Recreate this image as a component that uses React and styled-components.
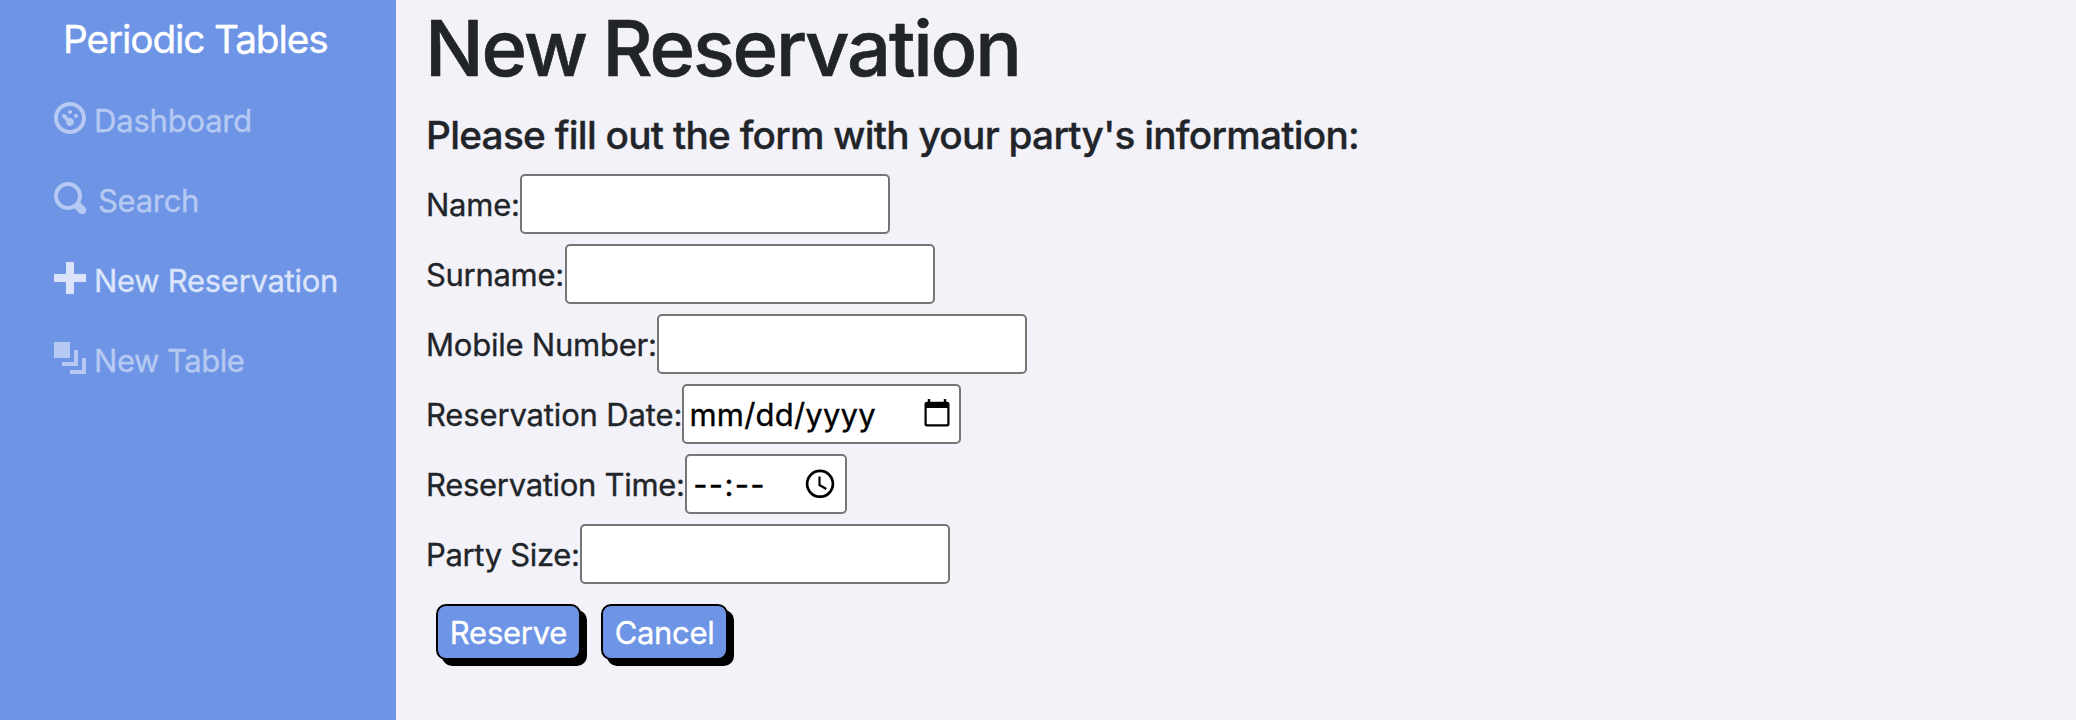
import React from "react";
import styled, { createGlobalStyle } from "styled-components";

const GlobalStyle = createGlobalStyle`
  *, *::before, *::after { box-sizing: border-box; }
  body {
    margin: 0;
    background: #f3f2f9;
    color: #212529;
    font-family: Inter, "Liberation Sans", sans-serif;
    font-size: 31px;
    -webkit-text-stroke: 0.35px currentColor;
  }
`;

const Page = styled.div`
  display: flex;
  height: 100vh;
  overflow: hidden;
`;

const Sidebar = styled.nav`
  flex: 0 0 396px;
  background: #6e94e6;
`;

const Brand = styled.a`
  display: block;
  margin-bottom: 3px;
  padding: 0 0 1px 63px;
  color: #fff;
  font-size: 38.8px;
  line-height: 77px;
  letter-spacing: -1.13px;
  white-space: nowrap;
`;

const NavList = styled.ul`
  margin: 0;
  padding: 0 0 0 54px;
  list-style: none;
`;

const NavItem = styled.li`
  display: flex;
  align-items: center;
  gap: ${(p) => p.$gap || 8}px;
  height: 80px;
  color: ${(p) => (p.$active ? "#dbe4fa" : "#b6c9f2")};
  letter-spacing: ${(p) => p.$spacing}px;
  line-height: 80px;
  white-space: nowrap;
`;

const NavIcon = styled.svg`
  flex: none;
  width: 32px;
  height: 32px;
  margin-bottom: 6px;
  fill: currentColor;
`;

const Main = styled.main`
  flex: 1;
  padding-left: 30px;
`;

const Title = styled.h1`
  margin: 0 0 15px -1px;
  font-size: 77.6px;
  font-weight: 500;
  line-height: 96px;
  letter-spacing: -2.15px;
  word-spacing: -2px;
  white-space: nowrap;
  -webkit-text-stroke-width: 0.6px;
`;

const Subtitle = styled.h4`
  margin: 0 0 15px 0;
  font-size: 38.8px;
  font-weight: 500;
  line-height: 48px;
  letter-spacing: -0.74px;
  white-space: nowrap;
`;

const Form = styled.form`
  display: flex;
  flex-direction: column;
  gap: 10px;
`;

const Row = styled.div`
  display: flex;
  height: 60px;
`;

const Label = styled.label`
  flex: none;
  width: ${(p) => p.$width}px;
  letter-spacing: ${(p) => p.$spacing}px;
  line-height: 61px;
  white-space: nowrap;
`;

const fieldBox = `
  height: 60px;
  border: 2px solid #767676;
  border-radius: 5px;
  background: #fff;
`;

const TextInput = styled.input`
  ${fieldBox}
  width: 370px;
  padding: 2px 4px;
  color: #000;
  font: inherit;
  outline: none;
`;

const PickerInput = styled.div`
  ${fieldBox}
  display: flex;
  justify-content: space-between;
  width: ${(p) => p.$width}px;
  padding: 0 ${(p) => p.$right}px 0 ${(p) => p.$left}px;
  color: #000;
  letter-spacing: ${(p) => p.$spacing}px;
  line-height: 57px;
  white-space: pre;
`;

const PickerIcon = styled.svg`
  flex: none;
  width: ${(p) => p.$width}px;
  height: 30px;
  margin-top: 12px;
`;

const Buttons = styled.div`
  display: flex;
  gap: 20px;
  padding: 10px 0 0 10px;
`;

const Button = styled.button`
  width: ${(p) => p.$width}px;
  height: 56px;
  padding: 0;
  border: 2px solid #000;
  border-radius: 10px;
  background: #6e94e6;
  box-shadow: 6px 6px 0 #000;
  color: #fff;
  font: inherit;
  letter-spacing: ${(p) => p.$spacing}px;
  line-height: 53px;
`;

const navItems = [
  {
    text: "Dashboard",
    spacing: -0.2,
    path: "M4 0c-2.2 0-4 1.8-4 4s1.8 4 4 4 4-1.8 4-4-1.8-4-4-4zm0 1c1.66 0 3 1.34 3 3s-1.34 3-3 3-3-1.34-3-3 1.34-3 3-3zm0 1c-.28 0-.5.22-.5.5s.22.5.5.5.5-.22.5-.5-.22-.5-.5-.5zm-1.66 1a.5.5 0 0 0-.19.84l.91.91c-.02.08-.06.16-.06.25 0 .55.45 1 1 1s1-.45 1-1-.45-1-1-1c-.09 0-.17.04-.25.06l-.91-.91a.5.5 0 0 0-.44-.16.5.5 0 0 0-.06 0zm3.16 0c-.28 0-.5.22-.5.5s.22.5.5.5.5-.22.5-.5-.22-.5-.5-.5z",
  },
  {
    text: "Search",
    spacing: -0.3,
    gap: 12,
    path: "M3.5 0c-1.93 0-3.5 1.57-3.5 3.5s1.57 3.5 3.5 3.5c.59 0 1.17-.14 1.66-.41a1 1 0 0 0 .13.13l1 1a1.02 1.02 0 1 0 1.44-1.44l-1-1a1 1 0 0 0-.16-.13c.27-.49.44-1.06.44-1.66 0-1.93-1.55-3.5-3.5-3.5zm0 1c1.39 0 2.5 1.11 2.5 2.5 0 .66-.24 1.27-.66 1.72-.01.01-.02.02-.03.03a1 1 0 0 0-.13.13c-.44.4-1.04.63-1.69.63-1.39 0-2.5-1.11-2.5-2.5s1.11-2.5 2.5-2.5z",
  },
  {
    text: "New Reservation",
    spacing: -0.29,
    active: true,
    path: "M3 0v3h-3v2h3v3h2v-3h3v-2h-3v-3h-2z",
  },
  {
    text: "New Table",
    spacing: -0.47,
    path: "M0 0v4h4v-4h-4zm5 2v3h-3v1h4v-4h-1zm2 2v3h-3v1h4v-4h-1z",
  },
];

function CalendarIcon() {
  return (
    <PickerIcon $width={26} viewBox="0 0 26 30">
      <path d="M3.8 1h2.4v2.7h13.6V1h2.4v2.7h.8a2.5 2.5 0 0 1 2.5 2.5V26a2.5 2.5 0 0 1-2.5 2.5H3A2.5 2.5 0 0 1 .5 26V6.200A2.500 2.500 0 0 1 3 3.700h.8zM2.700 10v15.500a.8.8 0 0 0 .8.8h19a.8.8 0 0 0 .8-.8V10z" fillRule="evenodd" />
    </PickerIcon>
  );
}

function ClockIcon() {
  return (
    <PickerIcon $width={30} viewBox="0 0 30 30" fill="none" stroke="#000">
      <circle cx="15" cy="15.800" r="12.900" strokeWidth="2.700" />
      <path d="M14.500 8.500v8.500l6.800 4" strokeWidth="2.200" />
    </PickerIcon>
  );
}

function Field({ label, width, spacing, children }) {
  return (
    <Row>
      <Label $width={width} $spacing={spacing}>{label}</Label>
      {children || <TextInput type="text" aria-label={label} />}
    </Row>
  );
}

export default function App() {
  return (
    <Page>
      <GlobalStyle />
      <Sidebar>
        <Brand>Periodic Tables</Brand>
        <NavList>
          {navItems.map((item) => (
            <NavItem key={item.text} $active={item.active} $gap={item.gap} $spacing={item.spacing}>
              <NavIcon viewBox="0 0 8 8"><path d={item.path} /></NavIcon>
              {item.text}
            </NavItem>
          ))}
        </NavList>
      </Sidebar>
      <Main>
        <Title>New Reservation</Title>
        <Subtitle>Please fill out the form with your party's information:</Subtitle>
        <Form onSubmit={(e) => e.preventDefault()}>
          <Field label="Name:" width={94} spacing={-0.25} />
          <Field label="Surname:" width={139} spacing={-0.3} />
          <Field label="Mobile Number:" width={231} spacing={-0.23} />
          <Field label="Reservation Date:" width={256} spacing={-0.15}>
            <PickerInput $width={279} $left={5.5} $right={9} $spacing={0.2}>
              mm/dd/yyyy
              <CalendarIcon />
            </PickerInput>
          </Field>
          <Field label="Reservation Time:" width={259} spacing={-0.3}>
            <PickerInput $width={162} $left={6.3} $right={10} $spacing={1.3}>
              --:--
              <ClockIcon />
            </PickerInput>
          </Field>
          <Field label="Party Size:" width={154} spacing={-0.34} />
          <Buttons>
            <Button type="submit" $width={145} $spacing={-0.25}>Reserve</Button>
            <Button type="button" $width={127} $spacing={-0.33}>Cancel</Button>
          </Buttons>
        </Form>
      </Main>
    </Page>
  );
}
